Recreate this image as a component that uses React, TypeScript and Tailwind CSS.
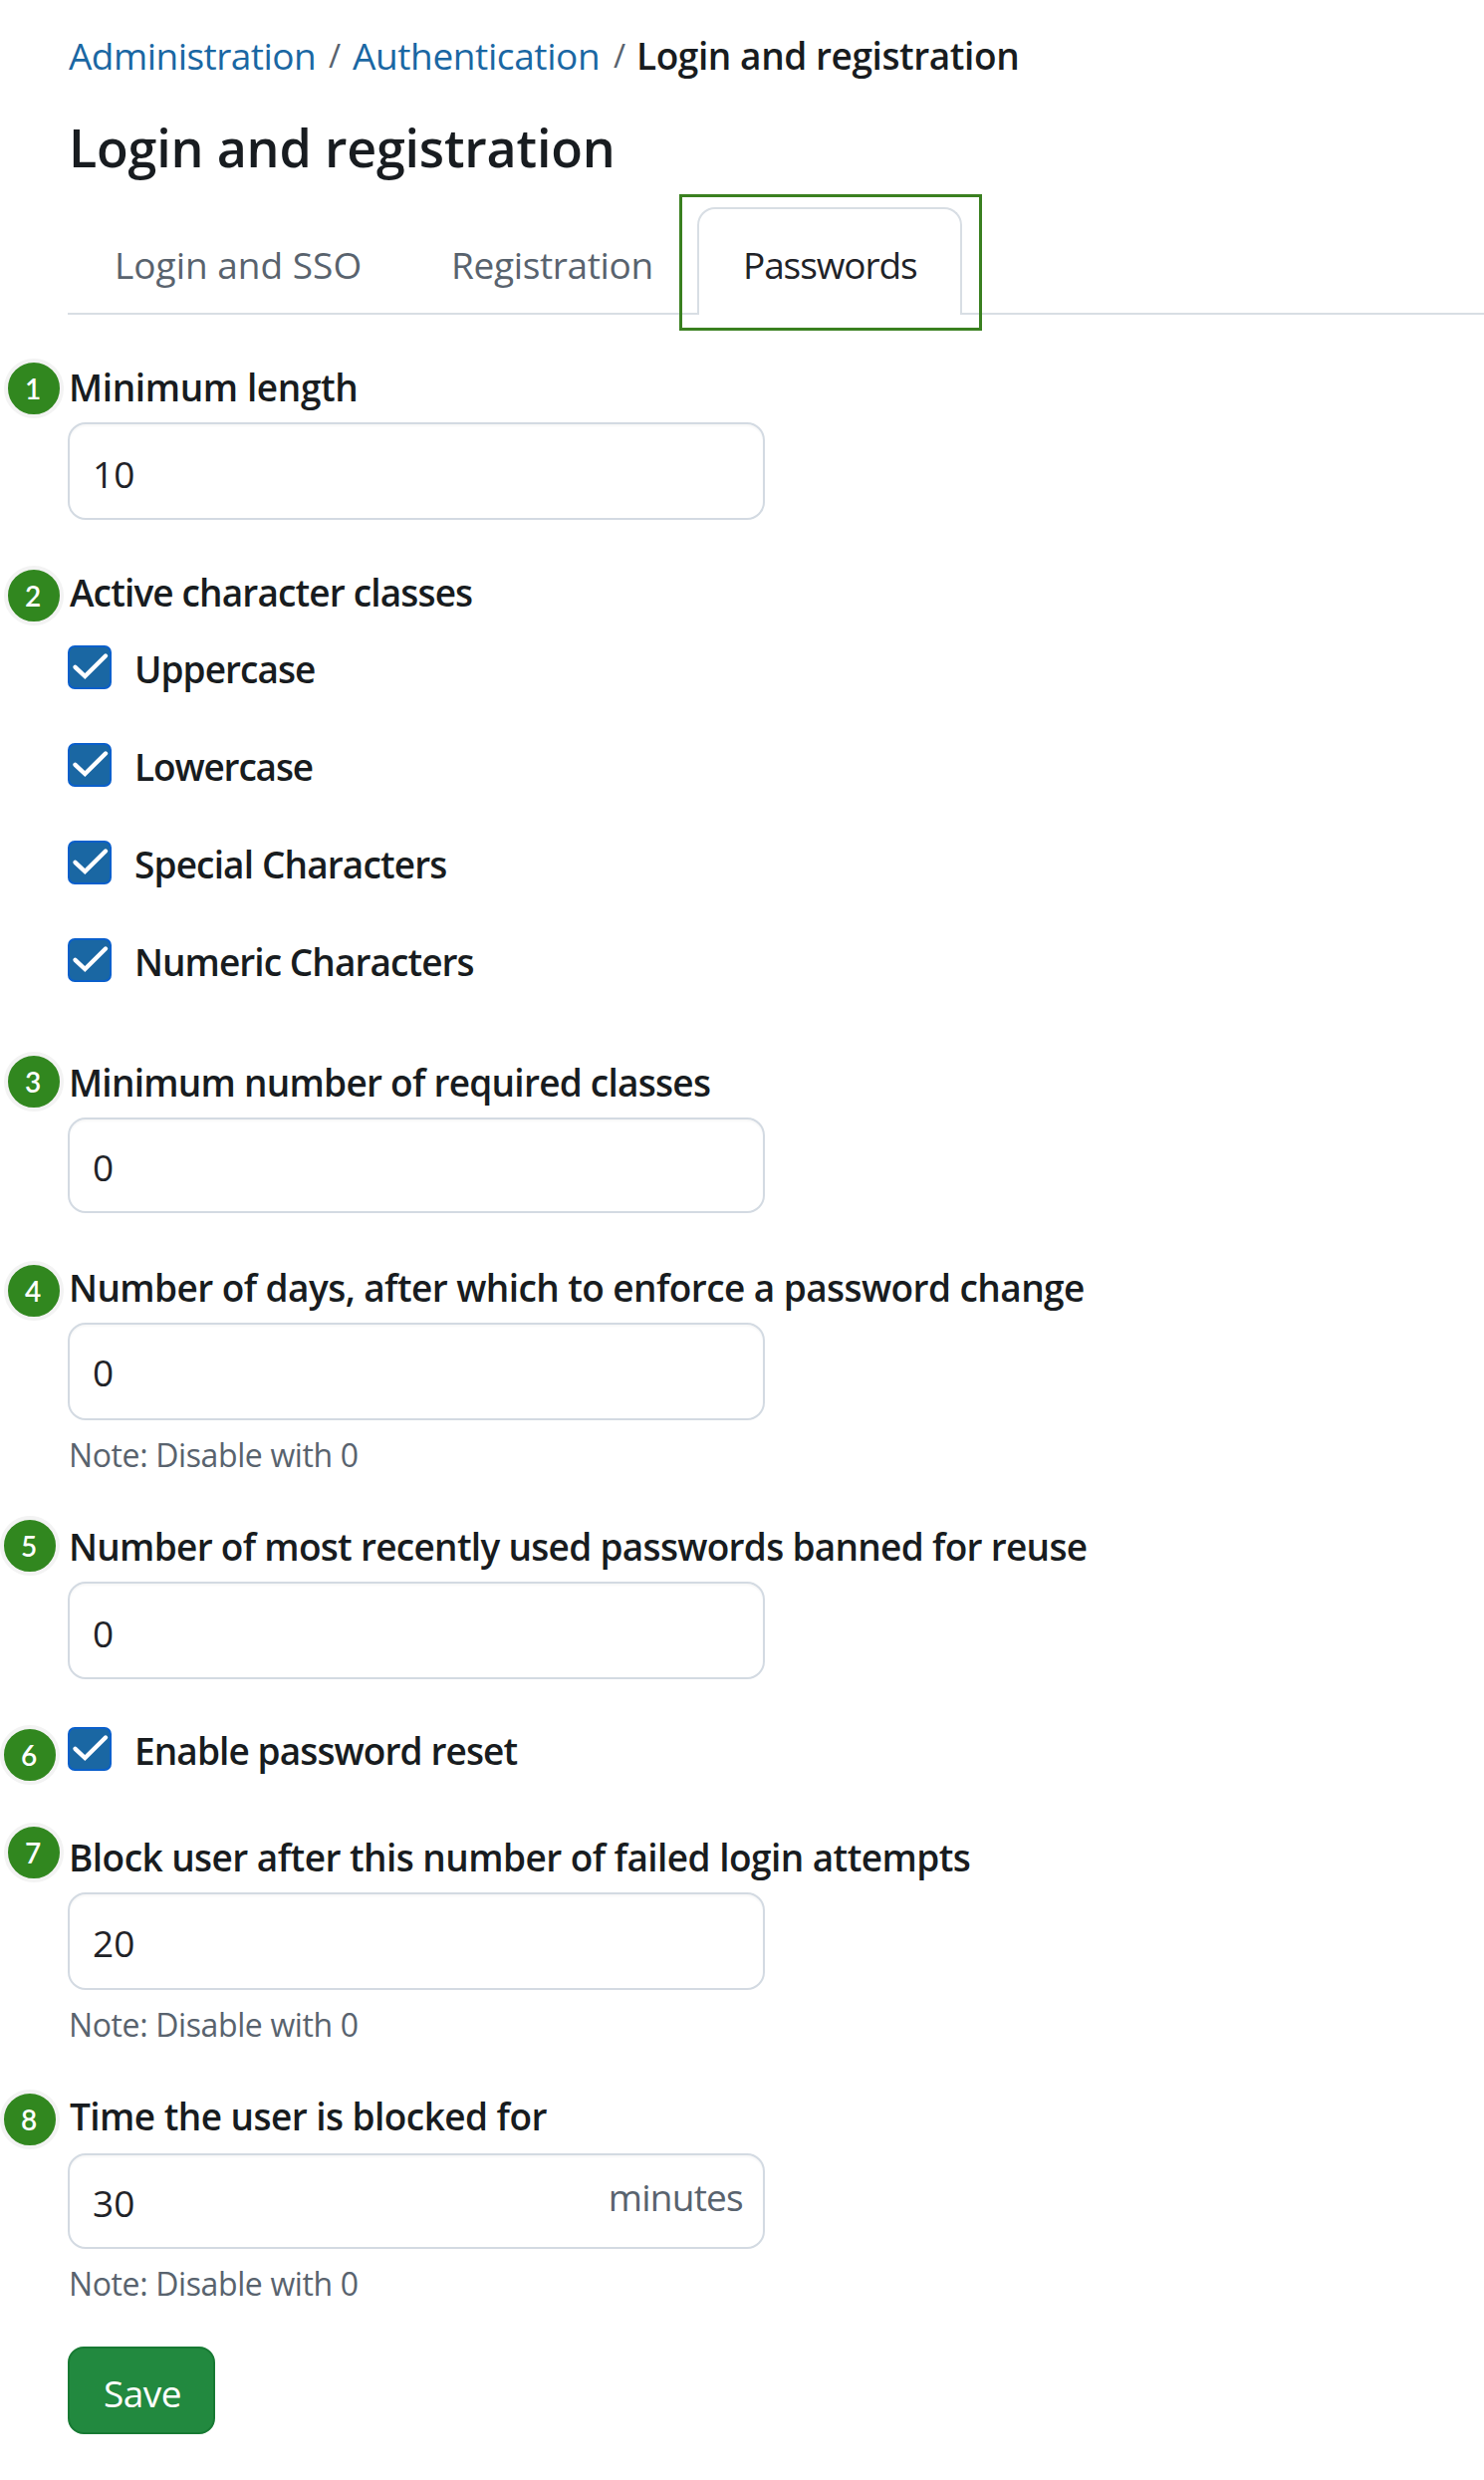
import type { ReactNode } from 'react';

function Badge({ n, className }: { n: number; className: string }) {
  return (
    <span
      className={`absolute flex size-[60px] items-center justify-center rounded-full border-4 border-[#f3f3f3] bg-[#31871f] pr-[2px] font-['Lato',sans-serif] text-[28px] leading-none font-semibold tracking-normal text-white ${className}`}
    >
      {n}
    </span>
  );
}

function Label({ children, className = 'pl-px' }: { children: ReactNode; className?: string }) {
  return <label className={`block h-12 leading-[49px] font-semibold whitespace-nowrap text-[#181c20] ${className}`}>{children}</label>;
}

function Field({ value, className, suffix }: { value: string; className: string; suffix?: string }) {
  return (
    <div
      className={`flex w-[700px] justify-between rounded-[18px] border-2 border-[#d3dae2] bg-white pr-[20px] pl-[23px] leading-[48px] text-[#1f2328] shadow-[inset_0_2px_2px_rgba(31,35,40,0.03)] ${className}`}
    >
      <span>{value}</span>
      {suffix && <span className="-mt-[6px] tracking-[-0.75px] text-[#59636e]">{suffix}</span>}
    </div>
  );
}

function Note() {
  return <p className="mt-3 h-11 pl-px text-[32px] leading-[45px] tracking-[-0.38px] text-[#59636e]">Note: Disable with 0</p>;
}

function Checkbox({ label, className }: { label: string; className: string }) {
  return (
    <div className="flex h-11">
      <svg viewBox="0 0 44 44" className="size-11 shrink-0" fill="none">
        <rect x="1" y="1" width="42" height="42" rx="6" fill="#1a67a3" stroke="#0a5fcb" strokeWidth="2" />
        <path d="M7.5 21.8 L17.3 31 L38 10.5" stroke="#fff" strokeWidth="4.4" strokeLinecap="round" />
      </svg>
      <span className={`font-semibold leading-[48px] whitespace-nowrap text-[#181c20] ${className}`}>{label}</span>
    </div>
  );
}

export default function App() {
  return (
    <main className="h-[2490px] overflow-hidden bg-white pt-8 pl-[68px] font-['Open_Sans',sans-serif] text-[37px] text-[#1f2328]">
      <nav className="flex h-12 pl-px leading-[48px] whitespace-nowrap">
        <a className="w-[246px] tracking-[-0.53px] text-[#1a67a3]">Administration</a>
        <span className="ml-[15px] w-[12px] text-[33px] text-[#59636e]">/</span>
        <a className="ml-[12px] w-[246px] tracking-[-0.39px] text-[#1a67a3]">Authentication</a>
        <span className="ml-[16px] w-[12px] text-[33px] text-[#59636e]">/</span>
        <span className="ml-[11px] font-semibold tracking-[-0.42px] text-[#181c20]">Login and registration</span>
      </nav>

      <h1 className="mt-[35px] h-16 pl-px text-[52px] leading-[66px] font-semibold tracking-[-0.2px] text-[#181c20]">Login and registration</h1>

      <div className="mt-[29px] flex h-[108px] leading-[48px] whitespace-nowrap text-[#59636e]">
        <div className="w-[338px] border-b-2 border-[#d8dee4] pt-[34px] pl-[47px]">Login and SSO</div>
        <div className="w-[294px] border-b-2 border-[#d8dee4] pt-[34px] pl-[47px] tracking-[-0.35px]">Registration</div>
        <div className="relative w-[266px] rounded-t-[18px] border-2 border-b-0 border-[#d8dee4] pt-[32px] pl-[44px] tracking-[-1.1px] text-[#1f2328]">
          Passwords
          <span className="absolute -top-[15px] -left-[20px] h-[137px] w-[304px] border-3 border-[#3a8020]" />
        </div>
        <div className="flex-1 border-b-2 border-[#d8dee4]" />
      </div>

      <section className="relative mt-12">
        <Badge n={1} className="-top-1 -left-16" />
        <Label className="pl-px tracking-[-0.38px]">Minimum length</Label>
        <Field value="10" className="mt-3 h-[98px] pt-[26px]" />
      </section>

      <section className="relative mt-[48px]">
        <Badge n={2} className="-top-[2px] -left-16" />
        <Label className="pl-[2px] tracking-[-0.85px]">Active character classes</Label>
        <div className="mt-[30px] flex flex-col gap-[54px]">
          <Checkbox label="Uppercase" className="ml-[23px] tracking-[-0.96px]" />
          <Checkbox label="Lowercase" className="ml-[23px] tracking-[-1.15px]" />
          <Checkbox label="Special Characters" className="ml-[23px] tracking-[-0.86px]" />
          <Checkbox label="Numeric Characters" className="ml-[23px] tracking-[-0.94px]" />
        </div>
      </section>

      <section className="relative mt-[76px]">
        <Badge n={3} className="-top-[6px] -left-16" />
        <Label className="pl-px tracking-[-0.74px]">Minimum number of required classes</Label>
        <Field value="0" className="mt-3 h-[96px] pt-[24px]" />
      </section>

      <section className="relative mt-[50px]">
        <Badge n={4} className="-top-[2px] -left-16" />
        <Label className="pl-px tracking-[-0.57px]">Number of days, after which to enforce a password change</Label>
        <Field value="0" className="mt-3 h-[98px] pt-[24px]" />
        <Note />
      </section>

      <section className="relative mt-[46px]">
        <Badge n={5} className="-top-[6px] -left-[68px]" />
        <Label className="pl-px tracking-[-0.7px]">Number of most recently used passwords banned for reuse</Label>
        <Field value="0" className="mt-3 h-[98px] pt-[26px]" />
      </section>

      <section className="relative mt-12">
        <Badge n={6} className="-top-[2px] -left-[68px]" />
        <Checkbox label="Enable password reset" className="ml-[23px] tracking-[-0.9px]" />
      </section>

      <section className="relative mt-[62px]">
        <Badge n={7} className="-top-[10px] -left-16" />
        <Label className="pl-px tracking-[-0.55px]">Block user after this number of failed login attempts</Label>
        <Field value="20" className="mt-3 h-[98px] pt-[25px]" />
        <Note />
      </section>

      <section className="relative mt-[46px]">
        <Badge n={8} className="-top-[2px] -left-[68px]" />
        <Label className="pl-[2px] tracking-[-0.55px]">Time the user is blocked for</Label>
        <Field value="30" suffix="minutes" className="mt-[14px] h-[96px] pt-[24px]" />
        <Note />
      </section>

      <button className="mt-[42px] block h-[88px] w-[148px] rounded-[16px] border-2 border-[#177a33] bg-[#22893f] pt-[5px] pl-[2px] text-center leading-[48px] tracking-[-0.5px] text-white">
        Save
      </button>
    </main>
  );
}
